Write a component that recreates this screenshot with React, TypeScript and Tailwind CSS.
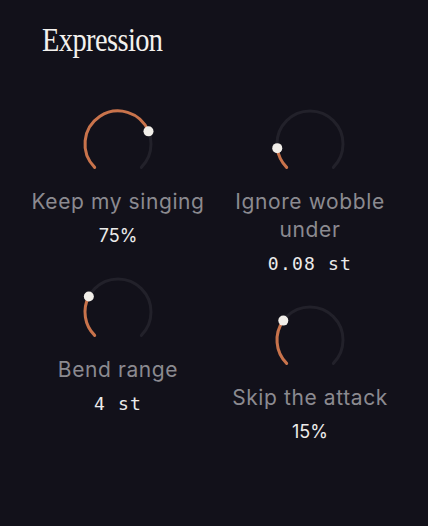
import React from 'react';

const ORANGE = '#c9734b';

function pt(cx: number, cy: number, r: number, deg: number) {
  const a = (deg * Math.PI) / 180;
  return { x: cx + r * Math.cos(a), y: cy - r * Math.sin(a) };
}

function arc(cx: number, cy: number, r: number, from: number, to: number) {
  const s = pt(cx, cy, r, from);
  const e = pt(cx, cy, r, to);
  const large = from - to > 180 ? 1 : 0;
  return `M ${s.x} ${s.y} A ${r} ${r} 0 ${large} 1 ${e.x} ${e.y}`;
}

function Knob({ amount }: { amount: number }) {
  const c = 36;
  const r = 33;
  const start = 225;
  const end = -45;
  const at = start - amount * 270;
  const dot = pt(c, c, r, at);
  return (
    <svg width="72" height="72" viewBox="0 0 72 72" className="overflow-visible">
      <path d={arc(c, c, r, start, end)} stroke="#22212a" strokeWidth="3" fill="none" strokeLinecap="round" />
      <path d={arc(c, c, r, start, at)} stroke={ORANGE} strokeWidth="3" fill="none" strokeLinecap="round" />
      <circle cx={dot.x} cy={dot.y} r="5" fill="#f1eee9" />
    </svg>
  );
}

type Param = { label: string; value: string; amount: number; mono?: boolean };

function Control({ p }: { p: Param }) {
  return (
    <div className="flex flex-col items-center text-center">
      <Knob amount={p.amount} />
      <div className="mt-2 text-[21px] leading-7 tracking-[0.6px] text-[#8b8a90] font-['Inter',sans-serif]">{p.label}</div>
      <div
        className={
          p.mono
            ? "mt-[6px] text-[18px] leading-7 tracking-[1.2px] text-[#ecebea] font-['DejaVu_Sans_Mono',monospace]"
            : "mt-[6px] text-[18px] leading-7 text-[#ecebea] font-['Inter',sans-serif]"
        }
      >
        {p.value}
      </div>
    </div>
  );
}

const left: Param[] = [
  { label: 'Keep my singing', value: '75%', amount: 0.75 },
  { label: 'Bend range', value: '4 st', amount: 0.27, mono: true },
];

const right: Param[] = [
  { label: 'Ignore wobble under', value: '0.08 st', amount: 0.14, mono: true },
  { label: 'Skip the attack', value: '15%', amount: 0.3 },
];

export default function App() {
  return (
    <div className="w-[428px] h-[526px] bg-[#12111a] overflow-hidden">
      <h1 className="mt-5 pl-[42px] text-[33px] leading-10 tracking-[-0.02em] text-[#f3f1ee] font-['Liberation_Serif',serif]">
        <span className="inline-block origin-left scale-x-[0.86]">Expression</span>
      </h1>
      <div className="mt-12 px-[25px] grid grid-cols-2 gap-x-[6px]">
        <div className="flex flex-col gap-[26px]">
          {left.map((p) => (
            <Control key={p.label} p={p} />
          ))}
        </div>
        <div className="flex flex-col gap-[26px]">
          {right.map((p) => (
            <Control key={p.label} p={p} />
          ))}
        </div>
      </div>
    </div>
  );
}
